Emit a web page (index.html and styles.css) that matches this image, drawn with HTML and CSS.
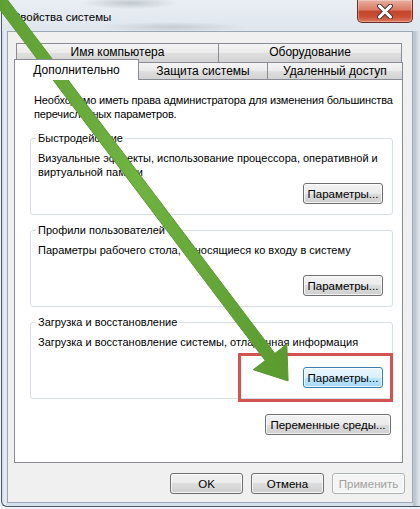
FILE: index.html
```html
<!DOCTYPE html>
<html lang="ru">
  <head>
    <meta charset="UTF-8" />
    <meta name="viewport" content="width=device-width, initial-scale=1.0" />
    <title>Свойства системы</title>
    <link rel="stylesheet" href="styles.css">
  </head>
  <body>
    <div class="window">
      <div class="titlebar">
        <span class="title">Свойства системы</span>
        <button class="close-btn" aria-label="Закрыть">
          <svg width="16" height="15" viewBox="0 0 16 15">
            <path d="M2.5 2 L13.5 13 M13.5 2 L2.5 13" stroke="#4a3a38" stroke-width="5" stroke-linecap="round" />
            <path d="M2.5 2 L13.5 13 M13.5 2 L2.5 13" stroke="#ffffff" stroke-width="3" stroke-linecap="round" />
          </svg>
        </button>
      </div>

      <div class="client">
        <!-- Tabs -->
        <div class="tab-row back">
          <div class="tab tab-name">Имя компьютера</div>
          <div class="tab tab-hw">Оборудование</div>
        </div>
        <div class="tab-row front">
          <div class="tab tab-adv selected">Дополнительно</div>
          <div class="tab tab-prot">Защита системы</div>
          <div class="tab tab-remote">Удаленный доступ</div>
        </div>

        <div class="panel">
          <p class="note">Необходимо иметь права администратора для изменения большинства перечисленных параметров.</p>

          <fieldset class="group">
            <legend>Быстродействие</legend>
            <div class="group-body">
              <p>Визуальные эффекты, использование процессора, оперативной и виртуальной памяти</p>
              <button class="btn btn-params">Параметры...</button>
            </div>
          </fieldset>

          <fieldset class="group">
            <legend>Профили пользователей</legend>
            <div class="group-body">
              <p>Параметры рабочего стола, относящиеся ко входу в систему</p>
              <button class="btn btn-params">Параметры...</button>
            </div>
          </fieldset>

          <fieldset class="group">
            <legend>Загрузка и восстановление</legend>
            <div class="group-body">
              <p>Загрузка и восстановление системы, отладочная информация</p>
              <button class="btn btn-params focused">Параметры...</button>
            </div>
          </fieldset>

          <div class="env-row">
            <button class="btn btn-env">Переменные среды...</button>
          </div>
        </div>

        <div class="dialog-buttons">
          <button class="btn btn-dlg">OK</button>
          <button class="btn btn-dlg">Отмена</button>
          <button class="btn btn-dlg" disabled>Применить</button>
        </div>
      </div>
    </div>

    <!-- Annotation overlay -->
    <div class="highlight"></div>
    <svg class="arrow" width="420" height="509" viewBox="0 0 420 509">
      <defs>
        <linearGradient id="arrowFill" x1="0" y1="0" x2="1" y2="0">
          <stop offset="0" stop-color="#5d9e32" />
          <stop offset="0.5" stop-color="#6fb341" />
          <stop offset="1" stop-color="#5a9a2f" />
        </linearGradient>
      </defs>
      <polygon
        points="-4.2,-15.6 274.8,353.4 286.8,344.3 288.1,380.9 253.2,369.7 265.2,360.6 -13.8,-8.4"
        fill="url(#arrowFill)"
        stroke="#5a972f"
        stroke-width="1"
        stroke-linejoin="round"
      />
    </svg>
  </body>
</html>
```

FILE: styles.css
```css
/* Base */
* {
  box-sizing: border-box;
}

html,
body {
  margin: 0;
}

body {
  position: relative;
  width: 420px;
  height: 509px;
  overflow: hidden;
  background: #eef2f6;
  font-family: "Liberation Sans", Arial, sans-serif;
  font-size: 11px;
  color: #000;
}

p {
  margin: 0;
}

/* Window frame */
.window {
  margin-left: 1px;
  width: 419px;
  height: 507px;
  border-left: 1px solid #4b5968;
  border-bottom: 1px solid #4b5968;
  border-bottom-left-radius: 6px;
  background: linear-gradient(
    90deg,
    #cbd7e3 0,
    #e9eff5 3px,
    #d6e0ea 5px,
    #d6e0ea 410px,
    #b7c1cb 412px,
    #dde4eb 417px
  );
}

.titlebar {
  display: flex;
  align-items: flex-start;
  height: 31px;
  background:
    radial-gradient(ellipse 48px 6px at 128px 3px, rgba(95, 105, 115, 0.28), transparent),
    radial-gradient(ellipse 75px 5px at 170px 27px, rgba(95, 105, 115, 0.22), transparent),
    linear-gradient(#e9eef3, #dfe6ed);
}

.title {
  padding: 10px 0 0 10px;
  font-size: 11.5px;
  line-height: 14px;
}

.close-btn {
  display: flex;
  align-items: center;
  justify-content: center;
  margin-left: auto;
  margin-right: 7px;
  width: 56px;
  height: 23px;
  padding: 0;
  border: 1px solid #6b2d24;
  border-top: none;
  border-radius: 0 0 5px 5px;
  background: linear-gradient(#eab0a2, #d97a63 45%, #c4432b 52%, #c84f35 75%, #dd7a5d);
  box-shadow: inset 0 0 0 1px rgba(255, 255, 255, 0.3);
}

/* Client area */
.client {
  margin-left: 5px;
  width: 406px;
  height: 472px;
  border: 1px solid #9aa8b7;
  background: #f0f0f0;
  padding-top: 11px;
}

/* Tabs */
.tab-row {
  display: flex;
  align-items: flex-end;
}

.tab-row.back {
  margin-left: 8px;
}

.tab-row.front {
  margin-left: 6px;
}

.tab {
  text-align: center;
  border: 1px solid #898c95;
  border-bottom: none;
  background: linear-gradient(#f4f4f4, #ebebeb 50%, #dfdfdf 50%, #d3d3d3);
  font-size: 12px;
  line-height: 16px;
}

.tab-row.back .tab {
  height: 19px;
  line-height: 17px;
}

.tab-name {
  width: 203px;
}

.tab-hw {
  width: 184px;
  margin-left: -1px;
}

.tab-row.front .tab {
  height: 17px;
}

.tab-prot {
  width: 130px;
  margin-left: -1px;
}

.tab-remote {
  width: 136px;
  margin-left: -1px;
}

.tab-row.front .tab.selected {
  position: relative;
  z-index: 2;
  width: 125px;
  height: 21px;
  margin-top: -3px;
  margin-bottom: -1px;
  line-height: 20px;
  background: #fff;
}

/* Tab body */
.panel {
  margin-left: 6px;
  width: 389px;
  height: 384px;
  border: 1px solid #898c95;
  background: #fff;
  padding-top: 13px;
}

.note {
  padding: 0 0 0 19px;
  line-height: 14px;
  letter-spacing: -0.15px;
}

.group {
  margin: 8px 9px 0 15px;
  padding: 0 9px 10px 7px;
  border: 1px solid #d5dfe5;
  border-radius: 3px;
  min-width: 0;
}

.note + .group {
  margin-top: 10px;
}

.group legend {
  margin-left: -2px;
  padding: 0 2px;
  line-height: 14px;
}

.group-body {
  display: flex;
  flex-direction: column;
  height: 59px;
  padding-top: 6px;
  line-height: 14px;
}

.group-body .btn {
  margin-top: auto;
  align-self: flex-end;
}

/* Buttons */
.btn {
  height: 21px;
  padding: 0;
  border: 1px solid #707070;
  border-radius: 3px;
  background: linear-gradient(#f2f2f2, #ebebeb 50%, #dddddd 50%, #cfcfcf);
  box-shadow: inset 0 0 0 1px rgba(255, 255, 255, 0.7);
  font-family: inherit;
  font-size: 11.5px;
  color: #000;
}

.btn-params {
  width: 80px;
}

.btn.focused {
  border-color: #3c7fb1;
  background: linear-gradient(#eaf6fd, #d9f0fc 50%, #bee6fd 50%, #a7d9f5);
}

.env-row {
  display: flex;
  justify-content: flex-end;
  margin-top: 15px;
  padding-right: 11px;
}

.btn-env {
  width: 126px;
}

.dialog-buttons {
  display: flex;
  justify-content: flex-end;
  gap: 8px;
  margin-top: 10px;
  padding-right: 7px;
}

.btn-dlg {
  width: 73px;
}

.btn:disabled {
  border-color: #adb2b5;
  background: #f4f4f4;
  color: #a0a0a0;
}

/* Annotation overlay */
.highlight {
  position: absolute;
  left: 238px;
  top: 353px;
  width: 155px;
  height: 49px;
  border: 3px solid #d35353;
}

.arrow {
  position: absolute;
  left: 0;
  top: 0;
  pointer-events: none;
}
```
